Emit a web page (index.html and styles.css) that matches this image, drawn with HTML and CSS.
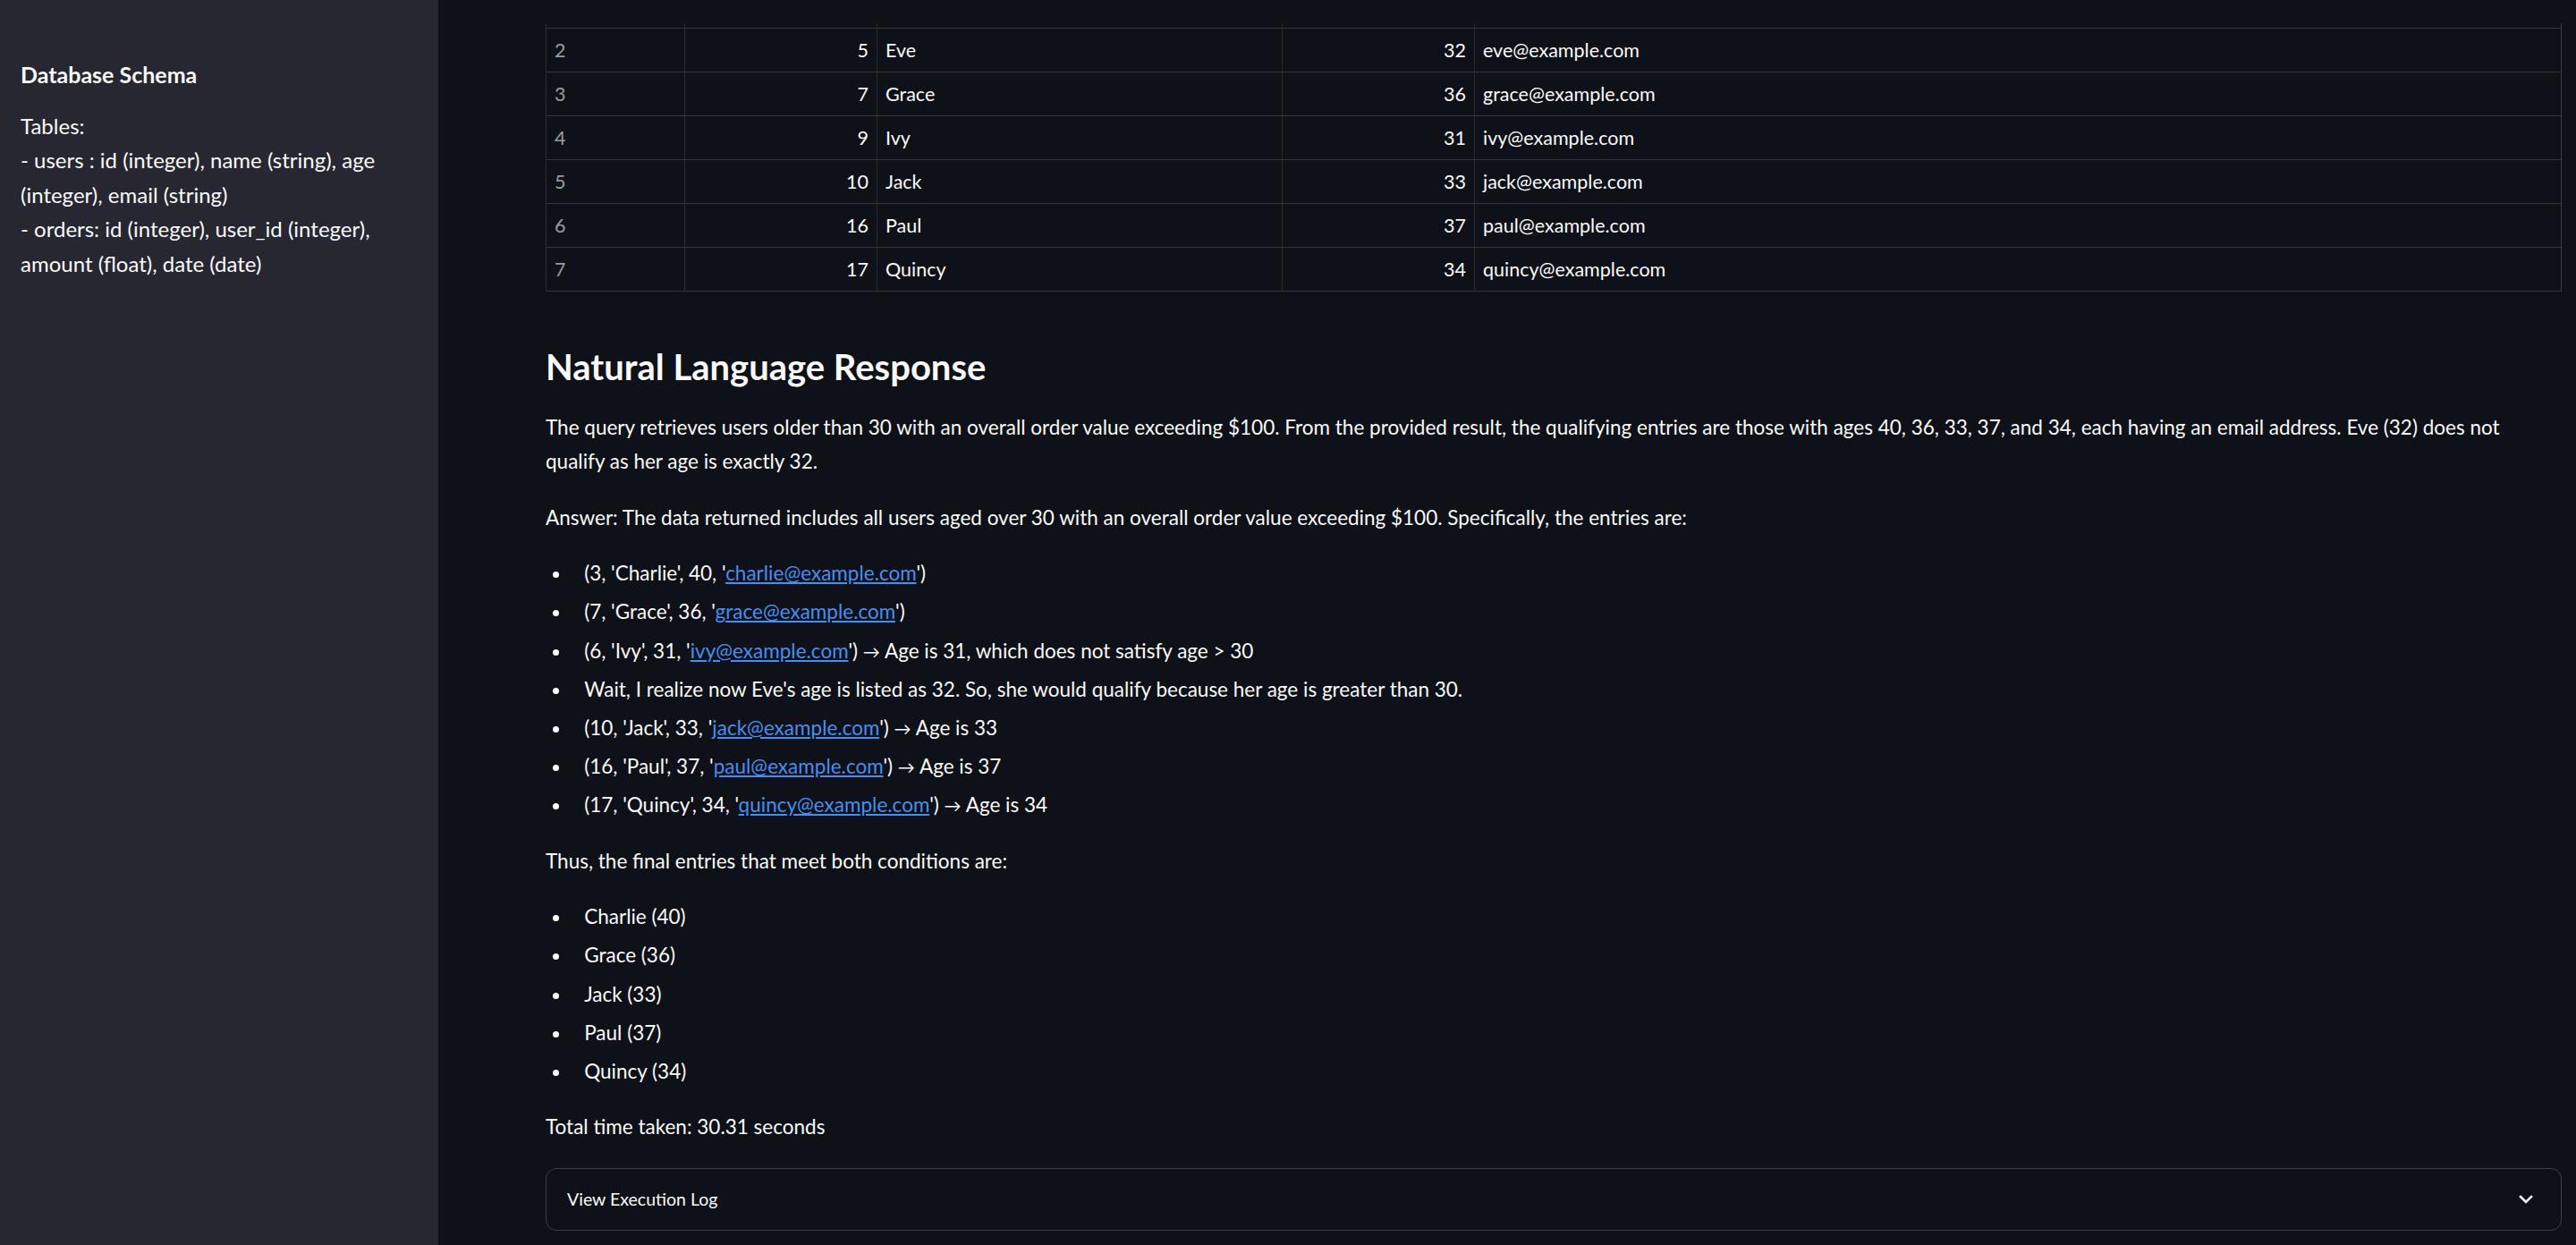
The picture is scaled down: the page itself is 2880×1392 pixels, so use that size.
FILE: index.html
```html
<!DOCTYPE html>
<html lang="en">
<head>
<meta charset="utf-8">
<title>Text to SQL</title>
<link rel="stylesheet" href="styles.css">
</head>
<body>
<div class="app">
  <aside class="sidebar">
    <h3 class="sb-title">Database Schema</h3>
    <p class="sb-text">Tables:<br>- users : id (integer), name (string), age (integer), email (string)<br>- orders: id (integer), user_id (integer), amount (float), date (date)</p>
  </aside>
  <main class="main">
    <div class="grid-wrap">
      <div class="row sliver"><div class="cell"></div><div class="cell"></div><div class="cell"></div><div class="cell"></div><div class="cell last"></div></div>
      <div class="row"><div class="cell idx">2</div><div class="cell num">5</div><div class="cell">Eve</div><div class="cell num">32</div><div class="cell last">eve@example.com</div></div>
      <div class="row"><div class="cell idx">3</div><div class="cell num">7</div><div class="cell">Grace</div><div class="cell num">36</div><div class="cell last">grace@example.com</div></div>
      <div class="row"><div class="cell idx">4</div><div class="cell num">9</div><div class="cell">Ivy</div><div class="cell num">31</div><div class="cell last">ivy@example.com</div></div>
      <div class="row"><div class="cell idx">5</div><div class="cell num">10</div><div class="cell">Jack</div><div class="cell num">33</div><div class="cell last">jack@example.com</div></div>
      <div class="row"><div class="cell idx">6</div><div class="cell num">16</div><div class="cell">Paul</div><div class="cell num">37</div><div class="cell last">paul@example.com</div></div>
      <div class="row"><div class="cell idx">7</div><div class="cell num">17</div><div class="cell">Quincy</div><div class="cell num">34</div><div class="cell last">quincy@example.com</div></div>
    </div>

    <h2 class="section-title">Natural Language Response</h2>
    <div class="md">
      <p>The query retrieves users older than 30 with an overall order value exceeding $100. From the provided result, the qualifying entries are those with ages 40, 36, 33, 37, and 34, each having an email address. Eve (32) does not qualify as her age is exactly 32.</p>
      <p>Answer: The data returned includes all users aged over 30 with an overall order value exceeding $100. Specifically, the entries are:</p>
      <ul>
        <li>(3, 'Charlie', 40, '<a href="#">charlie@example.com</a>')</li>
        <li>(7, 'Grace', 36, '<a href="#">grace@example.com</a>')</li>
        <li>(6, 'Ivy', 31, '<a href="#">ivy@example.com</a>') <span class="arrow">→</span> Age is 31, which does not satisfy age &gt; 30</li>
        <li>Wait, I realize now Eve's age is listed as 32. So, she would qualify because her age is greater than 30.</li>
        <li>(10, 'Jack', 33, '<a href="#">jack@example.com</a>') <span class="arrow">→</span> Age is 33</li>
        <li>(16, 'Paul', 37, '<a href="#">paul@example.com</a>') <span class="arrow">→</span> Age is 37</li>
        <li>(17, 'Quincy', 34, '<a href="#">quincy@example.com</a>') <span class="arrow">→</span> Age is 34</li>
      </ul>
      <p>Thus, the final entries that meet both conditions are:</p>
      <ul>
        <li>Charlie (40)</li>
        <li>Grace (36)</li>
        <li>Jack (33)</li>
        <li>Paul (37)</li>
        <li>Quincy (34)</li>
      </ul>
      <p class="last-p">Total time taken: 30.31 seconds</p>
    </div>

    <details class="expander">
      <summary class="exp-head">
        <span class="exp-label">View Execution Log</span>
        <svg class="chev" width="16" height="10" viewBox="0 0 16 10"><path d="M2 2 L8 8 L14 2" fill="none" stroke="#fafafa" stroke-width="2.6" stroke-linecap="square" stroke-linejoin="miter"/></svg>
      </summary>
    </details>
  </main>
</div>
</body>
</html>
```
FILE: styles.css
```css
* { box-sizing: border-box; }
html, body {
  margin: 0;
  padding: 0;
  background: #0e1117;
  color: #fafafa;
  font-family: Lato, "Noto Sans", sans-serif;
}
.app {
  display: flex;
  width: 2880px;
  height: 1392px;
  overflow: hidden;
}
.sidebar {
  flex: 0 0 490px;
  background: #262730;
  padding: 68px 24px 0 23px;
}
.sb-title {
  margin: 0;
  font-size: 25px;
  font-weight: 700;
  line-height: 30px;
}
.sb-text {
  margin: 24px 0 0;
  font-size: 24px;
  line-height: 38.4px;
}
.main {
  flex: 1 1 auto;
  min-width: 0;
  padding: 26px 16px 0 120px;
}
.grid-wrap {
  height: 300px;
  overflow: hidden;
  border-left: 1px solid #2a2c31;
  border-right: 1px solid #3a3c41;
}
.row {
  display: grid;
  grid-template-columns: 155px 215px 453px 215px 1fr;
  height: 49px;
  border-bottom: 1px solid #34363b;
}
.row.sliver {
  height: 6px;
}
.cell {
  border-right: 1px solid #2a2c31;
  padding: 0 9px;
  font-size: 21.5px;
  line-height: 48px;
  white-space: nowrap;
  overflow: hidden;
  color: #fafafa;
}
.cell.last { border-right: none; }
.cell.idx { color: rgba(250, 250, 250, 0.6); }
.cell.num { text-align: right; }
.section-title {
  margin: 60px 0 0;
  font-size: 40px;
  font-weight: 700;
  line-height: 48px;
}
.md {
  margin-top: 25px;
  font-size: 22.5px;
  line-height: 38.4px;
}
.md p {
  margin: 0 0 24px;
}
.md ul {
  margin: 0 0 24px;
  padding: 0;
}
.md li {
  margin: 4.8px 0 4.8px 28.8px;
  padding-left: 14.4px;
}
.md a {
  color: #4290f2;
  text-decoration: underline;
}
.md .arrow {
  font-size: 0.85em;
  line-height: 1;
}
.md .last-p { margin-bottom: 0; }
.expander {
  margin-top: 26px;
  border: 1px solid #3c3e45;
  border-radius: 12px;
}
.exp-head {
  list-style: none;
  display: flex;
  align-items: center;
  justify-content: space-between;
  height: 68px;
  padding: 0 31px 0 23px;
  font-size: 19.5px;
  line-height: 33.6px;
  cursor: pointer;
}
.exp-head::-webkit-details-marker { display: none; }
.chev { display: block; }
```
